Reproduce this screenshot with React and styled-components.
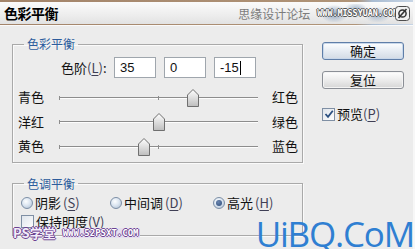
import React from 'react';
import styled, { createGlobalStyle } from 'styled-components';

const GlobalStyle = createGlobalStyle`
  html, body {
    margin: 0;
    padding: 0;
    background: #ececec;
  }
  body {
    font-family: "Noto Sans CJK SC", "Noto Sans", sans-serif;
    font-size: 13px;
    color: #111;
  }
`;

const Dialog = styled.div`
  position: relative;
  width: 415px;
  height: 249px;
  overflow: hidden;
  background: #ececec;
  box-sizing: border-box;
  border-right: 2px solid #f7f7f7;
`;

const TitleBar = styled.header`
  display: flex;
  align-items: center;
  height: 22px;
  padding: 0 3px 0 4px;
  border-top: 2px solid;
  border-image: linear-gradient(to right, #a3846a 0%, #b09478 86%, #a9bcd2 90%, #c8d6e6 100%) 1;
  border-bottom: 1px solid #a2a2a2;
  background: linear-gradient(#fbfbfb, #ededed 60%, #e2e2e2);
  box-shadow: 0 1px 0 #fafafa;
`;

const Title = styled.h1`
  margin: 0;
  font-size: 14px;
  font-weight: 700;
  line-height: 22px;
  color: #000;
  letter-spacing: -0.5px;
  flex: 1;
`;

const Forum = styled.span`
  font-size: 12px;
  color: #7c7c7c;
  margin-right: 6px;
`;

const SiteBadge = styled.span`
  display: flex;
  align-items: center;
  height: 18px;
  padding: 0 1px;
  font-family: "DejaVu Sans Mono", monospace;
  font-weight: 700;
  font-size: 8.4px;
  color: #fff;
  text-shadow: 1px 0 0 #555, -1px 0 0 #555, 0 1px 0 #555, 0 -1px 0 #555;
  background:
    radial-gradient(ellipse 14px 9px at 22% 55%, #8fa6c2 0%, rgba(143,166,194,0) 100%),
    radial-gradient(ellipse 12px 8px at 48% 35%, #9bb0c8 0%, rgba(155,176,200,0) 100%),
    radial-gradient(ellipse 14px 8px at 74% 60%, #a4b7cc 0%, rgba(164,183,204,0) 100%);
`;

const CornerIcon = styled.svg`
  width: 15px;
  height: 15px;
  margin-left: -4px;
  flex: none;
`;

const Body = styled.div`
  display: flex;
  padding-left: 12px;
`;

const MainColumn = styled.div`
  width: 291px;
  display: flex;
  flex-direction: column;
`;

const Group = styled.fieldset`
  margin: ${(p) => p.$top}px 0 0;
  padding: 0 0 ${(p) => p.$bottom}px;
  min-width: 0;
  border: 1px solid #a9a9a9;
  box-shadow: inset 1px 1px 0 #fafafa, 1px 1px 0 #fafafa;
`;

const Legend = styled.legend`
  margin-left: 11px;
  padding: 0 3px;
  font-size: 12px;
  line-height: 14px;
  color: #2d5c9c;
`;

const LevelRow = styled.div`
  display: flex;
  align-items: center;
  gap: 8px;
  margin-top: 6px;
  padding-left: 48px;
`;

const LevelLabel = styled.span`
  width: 44px;
  margin-right: 1px;
  white-space: nowrap;
  line-height: 16px;
`;

const Key = styled.span`
  text-decoration: underline;
  text-underline-offset: 2px;
`;

const Paren = styled.span`
  color: #3f3f55;
`;

const Field = styled.div`
  display: flex;
  align-items: center;
  width: 42px;
  height: 21px;
  box-sizing: border-box;
  padding-left: 5px;
  border: 1px solid #9fa6ad;
  background: #fff;
  font-family: "Liberation Sans", Arial, sans-serif;
  font-size: 13px;
  color: #111;
`;

const Caret = styled.span`
  display: inline-block;
  width: 1px;
  height: 14px;
  margin-left: 1px;
  background: #000;
`;

const Sliders = styled.div`
  display: flex;
  flex-direction: column;
  margin-top: 7px;
`;

const SliderRow = styled.div`
  display: grid;
  grid-template-columns: 41px 199px auto;
  align-items: center;
  height: 24.5px;
  padding-left: 5px;
  line-height: 16px;
`;

const SideLabel = styled.span`
  white-space: nowrap;
  padding-left: ${(p) => (p.$end ? 14 : 0)}px;
`;

const Track = styled.div`
  position: relative;
  height: 1px;
  background: #8d8d8d;
  box-shadow: 0 1px 0 #fdfdfd;
`;

const Tick = styled.span`
  position: absolute;
  top: -1px;
  left: ${(p) => p.$at};
  width: 1px;
  height: 4px;
  background: #8d8d8d;
`;

const Thumb = styled.svg`
  position: absolute;
  top: -8px;
  width: 12px;
  height: 18px;
`;

const RadioRow = styled.div`
  display: grid;
  grid-template-columns: 89px 103px auto;
  align-items: center;
  height: 18px;
  margin-top: 3px;
  padding-left: 8px;
  line-height: 16px;
`;

const Choice = styled.label`
  display: flex;
  align-items: center;
  gap: 2px;
  white-space: nowrap;
`;

const RadioDot = styled.span`
  position: relative;
  width: 12px;
  height: 12px;
  box-sizing: border-box;
  border-radius: 50%;
  border: 1px solid #7d8fa6;
  background: radial-gradient(circle at 40% 35%, #fdfeff 0%, #dce6f1 45%, #a9bbd0 100%);
  &::after {
    content: "";
    display: ${(p) => (p.$on ? 'block' : 'none')};
    position: absolute;
    inset: 2px;
    border-radius: 50%;
    background: radial-gradient(circle at 40% 35%, #6a86b0, #2c4a78);
  }
`;

const CheckRow = styled.div`
  display: flex;
  align-items: center;
  height: 18px;
  margin-top: 1px;
  padding-left: 8px;
  line-height: 16px;
`;

const Box = styled.span`
  display: flex;
  align-items: center;
  justify-content: center;
  width: 13px;
  height: 13px;
  box-sizing: border-box;
  border: 1px solid #7f8fa4;
  background: linear-gradient(135deg, #dfe5ec, #fdfdfd);
  margin-right: 2px;
`;

const SideColumn = styled.div`
  display: flex;
  flex-direction: column;
  margin-left: 19px;
  padding-top: 17px;
`;

const Button = styled.button`
  width: 82px;
  height: 18px;
  margin-bottom: 11px;
  padding: 0;
  border: 1px solid ${(p) => (p.$primary ? '#5f7ea8' : '#8b8f96')};
  border-radius: 3px;
  background: ${(p) =>
    p.$primary
      ? 'linear-gradient(#fdfeff, #e6ecf3 50%, #d3dbe5)'
      : 'linear-gradient(#fefefe, #ececec 50%, #d6d6d6)'};
  box-shadow: inset 0 0 0 1px ${(p) => (p.$primary ? '#c9d8ea' : '#f4f4f4')};
  font-family: "Noto Sans CJK SC", sans-serif;
  font-size: 13px;
  line-height: 16px;
  color: #111;
`;

const PreviewRow = styled.label`
  display: flex;
  align-items: center;
  margin-top: 6px;
  line-height: 16px;
`;

const PsMark = styled.div`
  position: absolute;
  left: 9px;
  top: 225px;
  display: flex;
  align-items: center;
  gap: 6px;
  padding: 1px 4px;
`;

const PsText = styled.span`
  font-size: 13px;
  font-weight: 700;
  line-height: 14px;
  color: #f3ecfa;
  text-shadow: 1px 0 0 #6c4391, -1px 0 0 #6c4391, 0 1px 0 #6c4391, 0 -1px 0 #6c4391;
`;

const PsUrl = styled.span`
  font-family: "DejaVu Sans Mono", monospace;
  font-weight: 700;
  font-size: 9px;
  line-height: 10px;
  color: #fff;
  padding: 0 1px;
  background: #e6def0;
  text-shadow: 1px 0 0 #6c4391, -1px 0 0 #6c4391, 0 1px 0 #6c4391, 0 -1px 0 #6c4391;
`;

const UiBQ = styled.div`
  position: absolute;
  right: -1px;
  bottom: -5px;
  font-family: "Open Sans", sans-serif;
  font-size: 35px;
  letter-spacing: -1.2px;
  line-height: 40px;
  color: #2f7fd2;
`;

const sliders = [
  { left: '青色', right: '红色', value: 35 },
  { left: '洋红', right: '绿色', value: 0 },
  { left: '黄色', right: '蓝色', value: -15 },
];

const TRACK = 199;

const Access = ({ k }) => (
  <Paren>
    (<Key>{k}</Key>)
  </Paren>
);

const SliderThumb = ({ value }) => (
  <Thumb viewBox="0 0 12 18" style={{ left: ((value + 100) / 200) * TRACK - 6 }}>
    <defs>
      <linearGradient id="thumbFill" x1="0" y1="0" x2="0" y2="1">
        <stop offset="0" stopColor="#ffffff" />
        <stop offset="1" stopColor="#bdbdbd" />
      </linearGradient>
    </defs>
    <path d="M0.5 17.5 V6 L6 0.5 L11.5 6 V17.5 Z" fill="url(#thumbFill)" stroke="#6f6f6f" />
  </Thumb>
);

const App = () => (
  <Dialog>
    <GlobalStyle />
    <TitleBar>
      <Title>色彩平衡</Title>
      <Forum>思缘设计论坛</Forum>
      <SiteBadge>WWW.MISSYUAN.COM</SiteBadge>
      <CornerIcon viewBox="0 0 15 15">
        <rect x="0.5" y="0.5" width="14" height="14" rx="3" fill="#f2f2f2" stroke="#4d4d4d" />
        <circle cx="7.5" cy="7.5" r="3.6" fill="none" stroke="#333" strokeWidth="1.5" />
        <path d="M3.5 12 L11.5 3" stroke="#333" strokeWidth="1.6" />
      </CornerIcon>
    </TitleBar>

    <Body>
      <MainColumn>
        <Group $top={12} $bottom={3}>
          <Legend>色彩平衡</Legend>
          <LevelRow>
            <LevelLabel>
              色阶<Access k="L" />:
            </LevelLabel>
            <Field>35</Field>
            <Field>0</Field>
            <Field>
              -15<Caret />
            </Field>
          </LevelRow>
          <Sliders>
            {sliders.map((s) => (
              <SliderRow key={s.left}>
                <SideLabel>{s.left}</SideLabel>
                <Track>
                  <Tick $at="0px" />
                  <Tick $at="99px" />
                  <SliderThumb value={s.value} />
                </Track>
                <SideLabel $end>{s.right}</SideLabel>
              </SliderRow>
            ))}
          </Sliders>
        </Group>

        <Group $top={14} $bottom={4}>
          <Legend>色调平衡</Legend>
          <RadioRow>
            <Choice>
              <RadioDot />
              阴影<Access k="S" />
            </Choice>
            <Choice>
              <RadioDot />
              中间调<Access k="D" />
            </Choice>
            <Choice>
              <RadioDot $on />
              高光<Access k="H" />
            </Choice>
          </RadioRow>
          <CheckRow>
            <Box />
            保持明度<Access k="V" />
          </CheckRow>
        </Group>
      </MainColumn>

      <SideColumn>
        <Button $primary>确定</Button>
        <Button>复位</Button>
        <PreviewRow>
          <Box>
            <svg width="10" height="10" viewBox="0 0 10 10">
              <path d="M1.5 5 L4 7.8 L8.8 1.8" fill="none" stroke="#2a4f80" strokeWidth="1.8" />
            </svg>
          </Box>
          预览<Access k="P" />
        </PreviewRow>
      </SideColumn>
    </Body>

    <PsMark>
      <PsText>PS学堂</PsText>
      <PsUrl>WWW.52PSXT.COM</PsUrl>
    </PsMark>
    <UiBQ>UiBQ.CoM</UiBQ>
  </Dialog>
);

export default App;
